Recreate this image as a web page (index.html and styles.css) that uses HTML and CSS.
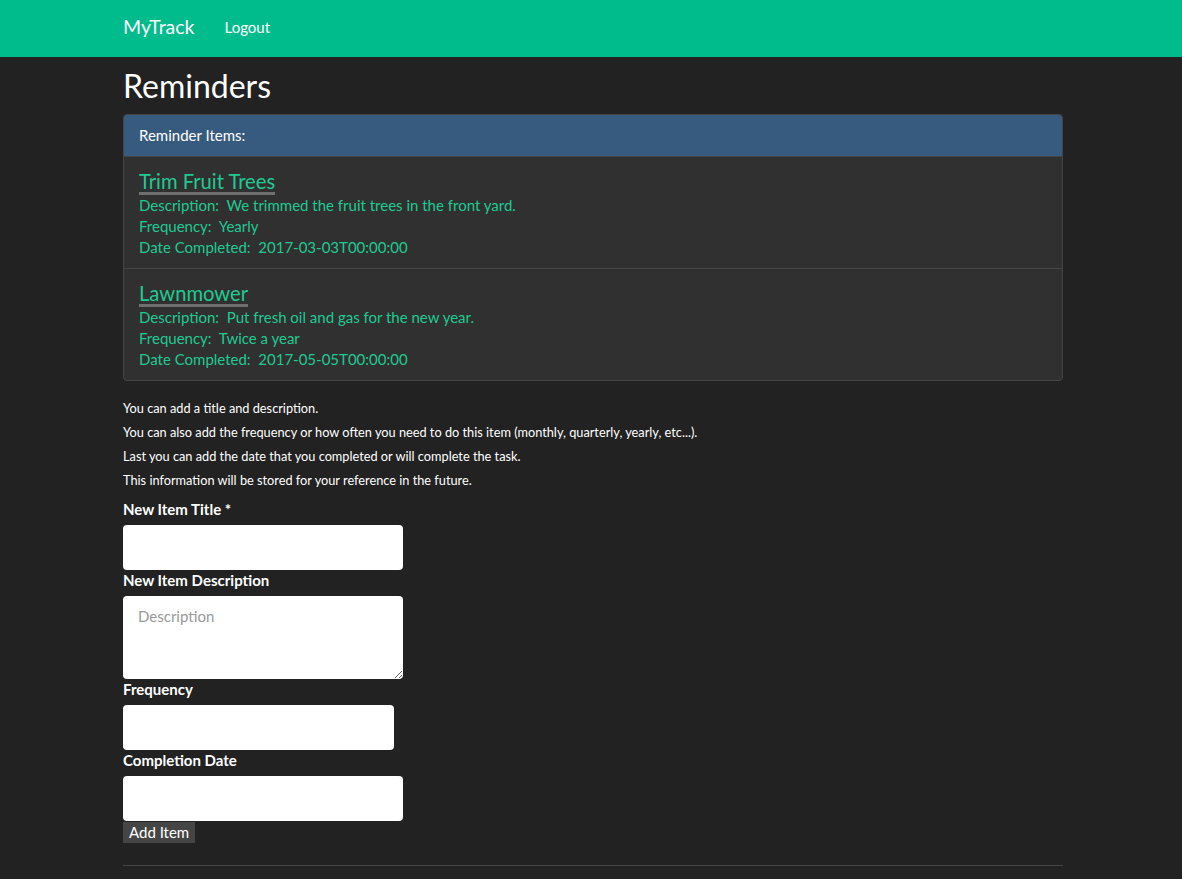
FILE: index.html
```html
<!DOCTYPE html>
<html>
<head>
<meta charset="utf-8">
<title>MyTrack</title>
<link rel="stylesheet" href="styles.css">
</head>
<body>
<nav class="navbar">
  <div class="container nav-inner">
    <a class="brand" href="#">MyTrack</a>
    <a class="nav-link" href="#">Logout</a>
  </div>
</nav>
<main class="container">
  <h1 class="page-title">Reminders</h1>
  <section class="panel">
    <div class="panel-heading">Reminder Items:</div>
    <ul class="list">
      <li class="item">
        <a class="item-title" href="#">Trim Fruit Trees</a>
        <div class="item-line">Description: &nbsp;We trimmed the fruit trees in the front yard.</div>
        <div class="item-line">Frequency: &nbsp;Yearly</div>
        <div class="item-line">Date Completed: &nbsp;2017-03-03T00:00:00</div>
      </li>
      <li class="item">
        <a class="item-title" href="#">Lawnmower</a>
        <div class="item-line">Description: &nbsp;Put fresh oil and gas for the new year.</div>
        <div class="item-line">Frequency: &nbsp;Twice a year</div>
        <div class="item-line">Date Completed: &nbsp;2017-05-05T00:00:00</div>
      </li>
    </ul>
  </section>
  <div class="info">
    <p>You can add a title and description.</p>
    <p>You can also add the frequency or how often you need to do this item (monthly, quarterly, yearly, etc...).</p>
    <p>Last you can add the date that you completed or will complete the task.</p>
    <p>This information will be stored for your reference in the future.</p>
  </div>
  <form class="form">
    <label class="label" for="t">New Item Title *</label>
    <input class="field" id="t" type="text">
    <label class="label" for="d">New Item Description</label>
    <textarea class="field area" id="d" placeholder="Description"></textarea>
    <label class="label" for="f">Frequency</label>
    <input class="field narrow" id="f" type="text">
    <label class="label" for="c">Completion Date</label>
    <input class="field" id="c" type="text">
    <button class="btn" type="button">Add Item</button>
  </form>
  <hr class="rule">
</main>
</body>
</html>
```

FILE: styles.css
```css
* { box-sizing: border-box; }
html, body { margin: 0; padding: 0; }
body {
  background: #222222;
  color: #ffffff;
  font-family: Lato, "Liberation Sans", sans-serif;
  font-size: 15px;
  line-height: 1.42857;
}
.container {
  width: 970px;
  margin: 0 auto;
  padding: 0 13px 0 17px;
}
.navbar {
  background: #00bc8c;
  height: 57px;
}
.nav-inner {
  display: flex;
  align-items: center;
  height: 57px;
  padding-bottom: 3px;
}
.brand {
  color: #ffffff;
  text-decoration: none;
  font-size: 19.5px;
  margin-right: 30px;
  margin-bottom: 1px;
}
.nav-link {
  color: #ffffff;
  text-decoration: none;
  font-size: 15px;
  margin-top: 1px;
}
.page-title {
  font-size: 32px;
  font-weight: 400;
  line-height: 1.1;
  margin: 11px 0 11px;
}
.panel {
  background: #303030;
  border: 1px solid #464545;
  border-radius: 4px;
  margin-bottom: 18px;
  overflow: hidden;
}
.panel-heading {
  background: #375a7f;
  height: 43px;
  border-bottom: 1px solid #464545;
  margin: -1px -1px 0;
  border-radius: 4px 4px 0 0;
  padding: 11px 15px 10px 16px;
}
.list { list-style: none; margin: 0; padding: 0; }
.item {
  padding: 11px 15px 10px;
  border-top: 1px solid #464545;
  color: #1fca92;
}
.item:first-child { border-top: 0; }
.item-title {
  display: block;
  width: fit-content;
  color: #1fca92;
  text-decoration: none;
  font-size: 20.2px;
  line-height: 21px;
  padding-top: 3px;
  border-bottom: 3px solid #6f6f6f;
}
.item-line { line-height: 21px; }
.info p {
  margin: 0 0 6px;
  font-size: 12.75px;
  line-height: 18px;
}
.form {
  display: flex;
  flex-direction: column;
  align-items: flex-start;
  margin-top: 10px;
}
.label {
  font-weight: 700;
  margin-bottom: 5px;
  line-height: 21px;
}
.field {
  width: 280px;
  height: 45px;
  border: 0;
  border-radius: 4px;
  background: #ffffff;
  padding: 10px 15px;
  font-family: inherit;
  font-size: 15px;
  color: #222;
}
.narrow { width: 271px; }
.area {
  height: 83px;
  resize: vertical;
  padding-top: 11px;
}
.area::placeholder { color: #999; }
.btn {
  margin-top: 1px;
  background: #464545;
  color: #ffffff;
  border: 0;
  font-family: inherit;
  font-size: 15px;
  line-height: 21px;
  padding: 0 6px;
  height: 21px;
}
.rule {
  border: 0;
  border-top: 1px solid #464545;
  margin: 22px 0 0;
}
```
